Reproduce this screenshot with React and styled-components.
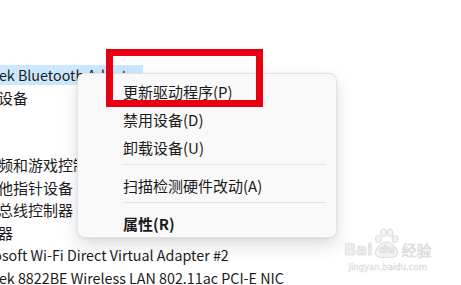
import React from 'react';
import styled, { createGlobalStyle } from 'styled-components';

const GlobalStyle = createGlobalStyle`
   html, body {
      margin: 0;
      padding: 0;
      background: #ffffff;
      overflow: hidden;
   }

   body {
      font-family: "Noto Sans CJK SC", "Noto Sans", sans-serif;
      color: #1b1b1b;
   }
`;

const Page = styled.div`
   position: relative;
   width: 461px;
   height: 285px;
   overflow: hidden;
   background: #ffffff;
`;

const Tree = styled.ul`
   list-style: none;
   margin: 0 0 0 -62px;
   padding: 64px 0 0 0;
`;

const Row = styled.li`
   height: 22.5px;
   display: flex;
   align-items: center;
   padding-left: ${props => props.$level * 27}px;
   font-size: ${props => (props.$level > 0 ? '14.3px' : '15px')};
   white-space: nowrap;
`;

const Label = styled.span`
   display: inline-block;
   height: 20px;
   line-height: 20px;
   padding: 0 3px 0 2px;
   margin-left: -2px;
   background: ${props => (props.$selected ? '#cce8ff' : 'transparent')};
`;

const Menu = styled.div`
   position: absolute;
   left: 77px;
   top: 73px;
   width: 258px;
   padding: 3px 0 0 0;
   background: #f9f9f9;
   border: 1px solid #e2e2e2;
   border-radius: 8px;
   box-shadow: 0 8px 18px rgba(0, 0, 0, 0.13), 0 1px 4px rgba(0, 0, 0, 0.06);
`;

const Item = styled.div`
   height: 28px;
   display: flex;
   align-items: center;
   padding-left: 45px;
   font-size: 15px;
   font-weight: ${props => (props.$bold ? 700 : 400)};
   color: #1a1a1a;
`;

const Separator = styled.div`
   height: 1px;
   margin: 3px 10px 6px 45px;
   background: #e3e3e3;
`;

const Callout = styled.div`
   position: absolute;
   left: 106px;
   top: 49px;
   width: 157px;
   height: 58px;
   box-sizing: border-box;
   border: 7px solid #e60012;
`;

const Watermark = styled.div`
   position: absolute;
   left: 344px;
   top: 228px;
   display: flex;
   flex-direction: column;
   align-items: center;
   color: #efefef;
   font-family: "DejaVu Sans", sans-serif;
`;

const Brand = styled.div`
   display: flex;
   align-items: flex-end;
   gap: 1px;
   font-size: 16px;
   font-weight: 700;
   line-height: 18px;
   -webkit-text-stroke: 0.6px #d6d6d6;
`;

const Paw = styled.div`
   position: relative;
   width: 27px;
   height: 31px;
   display: flex;
   align-items: flex-end;
   justify-content: center;
`;

const PawText = styled.span`
   position: relative;
   font-size: 11px;
   line-height: 14px;
   margin-bottom: 2px;
`;

const Cn = styled.span`
   font-family: "Noto Sans CJK SC", sans-serif;
   font-size: 15px;
   font-weight: 400;
`;

const Site = styled.div`
   margin-top: 2px;
   font-size: 8.5px;
   line-height: 12px;
   -webkit-text-stroke: 0.4px #d8d8d8;
`;

const rows = [
   { level: 1, text: 'Realtek Bluetooth Adapter', selected: true },
   { level: 0, text: '内存技术设备' },
   { level: 0, text: '计算机' },
   { level: 0, text: '监视器' },
   { level: 0, text: '声音、视频和游戏控制器' },
   { level: 0, text: '鼠标和其他指针设备' },
   { level: 0, text: '通用串行总线控制器' },
   { level: 0, text: '网络适配器' },
   { level: 1, text: 'Microsoft Wi-Fi Direct Virtual Adapter #2' },
   { level: 1, text: 'Realtek 8822BE Wireless LAN 802.11ac PCI-E NIC' },
];

function PawIcon() {
   return (
      <svg width="27" height="31" viewBox="0 0 27 31" style={{ position: 'absolute', left: 0, top: 0 }}>
         <g fill="#f3f3f3" stroke="#d4d4d4" strokeWidth="0.8">
            <ellipse cx="5.5" cy="11" rx="3" ry="3.6" />
            <ellipse cx="10.5" cy="4.8" rx="3" ry="3.8" />
            <ellipse cx="17" cy="4.8" rx="3" ry="3.8" />
            <ellipse cx="22" cy="11" rx="3" ry="3.6" />
            <path d="M13.5 14 C 8 14, 2 20, 2.5 25.5 C 3 30, 9 30, 13.5 29 C 18 30, 24 30, 24.5 25.5 C 25 20, 19 14, 13.5 14 Z" />
         </g>
      </svg>
   );
}

export default function App() {
   return (
      <Page>
         <GlobalStyle />
         <Tree>
            {rows.map((row, i) => (
               <Row key={i} $level={row.level}>
                  <Label $selected={row.selected}>{row.text}</Label>
               </Row>
            ))}
         </Tree>

         <Menu>
            <Item>更新驱动程序(P)</Item>
            <Item>禁用设备(D)</Item>
            <Item>卸载设备(U)</Item>
            <Separator />
            <Item>扫描检测硬件改动(A)</Item>
            <Separator />
            <Item $bold>属性(R)</Item>
         </Menu>

         <Callout />

         <Watermark>
            <Brand>
               <span>Bai</span>
               <Paw>
                  <PawIcon />
                  <PawText>du</PawText>
               </Paw>
               <Cn>经验</Cn>
            </Brand>
            <Site>jingyan.baidu.com</Site>
         </Watermark>
      </Page>
   );
}
